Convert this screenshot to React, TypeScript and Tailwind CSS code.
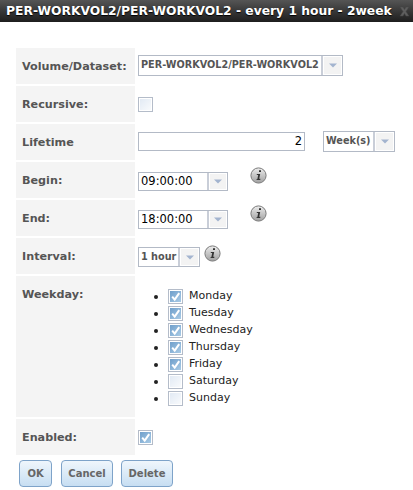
import React from "react";

const font = { fontFamily: '"DejaVu Sans", Verdana, sans-serif' };

function Arrow() {
  return (
    <svg width="8" height="5" viewBox="0 0 8 5" className="block">
      <path d="M0 0.5h8L4 4.5z" fill="#a3b4cf" />
    </svg>
  );
}

function Select({ w, h, arrowW, bold, children, textClass }: { w: string; h: string; arrowW: string; bold?: boolean; children: React.ReactNode; textClass?: string }) {
  return (
    <div className={`flex shrink-0 border border-[#b3bac6] bg-white ${w} ${h}`}>
      <div className={`flex-1 flex items-center pl-[2px] overflow-hidden whitespace-nowrap ${bold ? "font-bold text-[#555]" : "text-black"} ${textClass ?? "text-[11.5px]"}`}>{children}</div>
      <div className={`flex items-center justify-center border-l-2 border-[#c9ced8] bg-[#f3f3f3] shadow-[inset_0_0_0_1px_#fff] ${arrowW}`}>
        <Arrow />
      </div>
    </div>
  );
}

function Check({ checked }: { checked?: boolean }) {
  return (
    <div className="w-[15px] h-[15px] shrink-0 border border-[#b4bcc9] p-px bg-white">
      <div className={`w-full h-full ${checked ? "bg-gradient-to-br from-[#6f9fcb] to-[#a9cbe6]" : "bg-gradient-to-br from-[#e2eaf4] to-[#f8fafc]"}`}>
        {checked && (
          <svg viewBox="0 0 11 11" className="block w-full h-full">
            <path d="M2.2 5.6L4.7 8.6L9.2 2.2" fill="none" stroke="#fff" strokeWidth="2" />
          </svg>
        )}
      </div>
    </div>
  );
}

function Info({ className }: { className?: string }) {
  return (
    <svg width="17" height="17" viewBox="0 0 17 17" className={`block shrink-0 ${className ?? ""}`}>
      <defs>
        <linearGradient id="infog" x1="0" y1="0" x2="0" y2="1">
          <stop offset="0" stopColor="#ececec" />
          <stop offset="1" stopColor="#a0a0a0" />
        </linearGradient>
      </defs>
      <circle cx="8.5" cy="8.500" r="7.6" fill="url(#infog)" stroke="#7a7a7a" strokeWidth="1" />
      <path d="M9 3.200h2v1.800H9zM6.800 7h3.400l-1 4.800h1.100V13H6.400v-.6l1-.5.800-4h-1.400z" fill="#333" />
    </svg>
  );
}

function Row({ label, cellH = "h-[36px]", labelPad = "items-center pt-[2px]", children, contentClass }: { label: string; cellH?: string; labelPad?: string; children?: React.ReactNode; contentClass?: string }) {
  return (
    <div className={`flex gap-[3px] ${cellH}`}>
      <div className={`w-[119px] shrink-0 bg-[#f4f4f4] pl-[6px] flex ${labelPad} text-[11.2px] font-bold text-[#555]`}>{label}</div>
      <div className={`flex-1 flex ${contentClass ?? ""}`}>{children}</div>
    </div>
  );
}

const days: [string, boolean][] = [
  ["Monday", true],
  ["Tuesday", true],
  ["Wednesday", true],
  ["Thursday", true],
  ["Friday", true],
  ["Saturday", false],
  ["Sunday", false],
];

function Btn({ w, children }: { w: string; children: React.ReactNode }) {
  return (
    <button className={`h-[27px] ${w} rounded-[4px] border border-[#7ea3c9] bg-gradient-to-b from-[#eff6fc] to-[#c7def2] text-[10px] font-bold text-[#666]`}>
      {children}
    </button>
  );
}

export default function App() {
  return (
    <div className="w-[413px] h-[490px] bg-white overflow-hidden" style={font}>
      <div className="h-[22px] bg-gradient-to-b from-[#555] to-[#1e1e1e] flex items-center justify-between pl-[6px] pr-[3px]">
        <span className="text-[12.3px] font-bold text-white whitespace-nowrap [text-shadow:0_1px_1px_#000]">PER-WORKVOL2/PER-WORKVOL2 - every 1 hour - 2week</span>
        <svg width="11" height="11" viewBox="0 0 11 11" className="block shrink-0">
          <path d="M1 1h3l1.500 2.500L7 1h3L7 5.500l3 4.500H7L5.500 7.500 4 10H1l3-4.500z" fill="#5e5e5e" stroke="#444" strokeWidth="0.5" />
        </svg>
      </div>
      <div className="pt-[26px] pl-[16px] flex flex-col gap-[2px]">
        <Row label="Volume/Dataset:" contentClass="items-start pt-[7px]">
          <Select w="w-[205px]" h="h-[21px]" arrowW="w-[21px]" bold textClass="text-[9.7px]">PER-WORKVOL2/PER-WORKVOL2</Select>
        </Row>
        <Row label="Recursive:" contentClass="items-start pt-[11px]">
          <Check />
        </Row>
        <Row label="Lifetime" contentClass="items-start pt-[7px]">
          <div className="w-[167px] h-[19px] mt-px border border-[#b3bac6] flex items-center justify-end pr-[2px] text-[11.5px] text-black">2</div>
          <div className="ml-[18px]">
            <Select w="w-[72px]" h="h-[21px]" arrowW="w-[21px]" bold textClass="text-[9.7px]">Week(s)</Select>
          </div>
        </Row>
        <Row label="Begin:" contentClass="items-start">
          <div className="pt-[10px]">
            <Select w="w-[90px]" h="h-[19px]" arrowW="w-[20px]">09:00:00</Select>
          </div>
          <Info className="ml-[22px] mt-[5px]" />
        </Row>
        <Row label="End:" contentClass="items-start">
          <div className="pt-[10px]">
            <Select w="w-[90px]" h="h-[19px]" arrowW="w-[20px]">18:00:00</Select>
          </div>
          <Info className="ml-[22px] mt-[5px]" />
        </Row>
        <Row label="Interval:" contentClass="items-start">
          <div className="pt-[9px]">
            <Select w="w-[62px]" h="h-[20px]" arrowW="w-[21px]" bold textClass="text-[9.7px]">1 hour</Select>
          </div>
          <Info className="ml-[4px] mt-[7px]" />
        </Row>
        <Row label="Weekday:" cellH="h-[141px]" labelPad="items-start pt-[11px]">
          <ul className="pt-[12px] pl-[30px] flex flex-col">
            {days.map(([d, c]) => (
              <li key={d} className="h-[17px] flex items-center relative">
                <span className="absolute left-[-14px] top-[7px] w-[4px] h-[4px] rounded-full bg-[#222]" />
                <Check checked={c} />
                <span className="ml-[6px] text-[11px] text-[#222]">{d}</span>
              </li>
            ))}
          </ul>
        </Row>
        <Row label="Enabled:" contentClass="items-start pt-[11px]">
          <Check checked />
        </Row>
      </div>
      <div className="flex pl-[19px] pt-[5px]">
        <Btn w="w-[33px]">OK</Btn>
        <div className="w-[9px]" />
        <Btn w="w-[52px]">Cancel</Btn>
        <div className="w-[8px]" />
        <Btn w="w-[52px]">Delete</Btn>
      </div>
    </div>
  );
}
